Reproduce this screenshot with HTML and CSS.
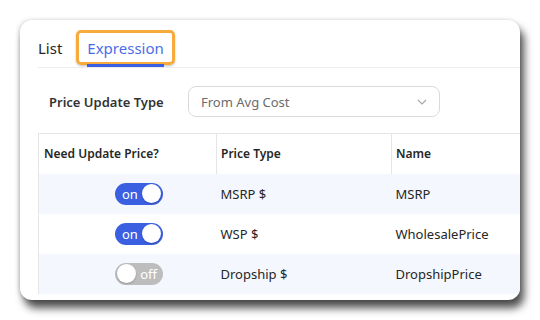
FILE: index.html
```html
<!DOCTYPE html>
<html lang="en">
<head>
    <meta charset="UTF-8">
    <meta name="viewport" content="width=device-width, initial-scale=1.0">
    <title>Price Update - Expression</title>
    <link rel="stylesheet" href="styles.css">
</head>
<body>
    <div class="page">
        <div class="card">
            <div class="tabs">
                <div class="tab">List</div>
                <div class="tab active">
                    <span class="tab-label">Expression</span>
                    <span class="ink-bar"></span>
                </div>
            </div>

            <div class="filter-row">
                <label class="filter-label">Price Update Type</label>
                <div class="select">
                    <span class="select-value">From Avg Cost</span>
                    <svg class="select-arrow" width="10" height="6" viewBox="0 0 10 6">
                        <path d="M1 1 L5 5 L9 1" fill="none" stroke="#a6a6a6" stroke-width="1.1"/>
                    </svg>
                </div>
            </div>

            <table class="price-table">
                <colgroup>
                    <col class="col-toggle">
                    <col class="col-type">
                    <col class="col-name">
                </colgroup>
                <thead>
                    <tr>
                        <th>Need Update Price?</th>
                        <th>Price Type</th>
                        <th>Name</th>
                    </tr>
                </thead>
                <tbody>
                    <tr class="striped">
                        <td class="toggle-cell"><span class="switch on"><span class="switch-text">on</span><span class="knob"></span></span></td>
                        <td>MSRP $</td>
                        <td>MSRP</td>
                    </tr>
                    <tr>
                        <td class="toggle-cell"><span class="switch on"><span class="switch-text">on</span><span class="knob"></span></span></td>
                        <td>WSP $</td>
                        <td>WholesalePrice</td>
                    </tr>
                    <tr class="striped">
                        <td class="toggle-cell"><span class="switch off"><span class="knob"></span><span class="switch-text">off</span></span></td>
                        <td>Dropship $</td>
                        <td>DropshipPrice</td>
                    </tr>
                </tbody>
            </table>
        </div>
    </div>
</body>
</html>
```

FILE: styles.css
```css
:root {
    --primary: #3a5fe0;
    --tab-blue: #4a6ee8;
    --focus: #f6ab3c;
    --border: #e6e6e6;
    --stripe: #f4f7fe;
    --text: #262626;
    --muted: #6b6b6b;
}

* {
    margin: 0;
    padding: 0;
    box-sizing: border-box;
}

body {
    background: #ffffff;
    font-family: 'Noto Sans', 'Open Sans', sans-serif;
    color: var(--text);
}

.page {
    padding: 20px;
}

.card {
    width: 500px;
    height: 280px;
    background: white;
    border-radius: 12px;
    overflow: hidden;
    padding-left: 18px;
    box-shadow: 4px 8px 8px rgba(0, 0, 0, 0.7), -1px 0 4px rgba(0, 0, 0, 0.18);
}

/* Tabs */
.tabs {
    display: flex;
    align-items: flex-end;
    height: 48px;
    padding-top: 10px;
    border-bottom: 1px solid #ededed;
}

.tab {
    position: relative;
    height: 37px;
    font-size: 15px;
    line-height: 36px;
    color: var(--text);
}

.tab.active {
    margin-left: 14px;
    padding: 0 8px;
    height: 35px;
    line-height: 30px;
    margin-bottom: 2px;
    border: 3px solid var(--focus);
    border-radius: 5px;
    color: var(--tab-blue);
    box-shadow: 0 1px 2px rgba(0, 0, 0, 0.25);
}

.ink-bar {
    position: absolute;
    left: 8px;
    right: 8px;
    bottom: -5px;
    height: 3px;
    background: var(--primary);
}

/* Filter row */
.filter-row {
    display: flex;
    align-items: center;
    height: 65px;
    padding-left: 11px;
    padding-top: 2px;
}

.filter-label {
    width: 139px;
    font-size: 13px;
    font-weight: 600;
    color: #333;
}

.select {
    display: flex;
    align-items: center;
    justify-content: space-between;
    width: 252px;
    height: 31px;
    padding: 0 12px 0 12px;
    border: 1px solid #d9d9d9;
    border-radius: 8px;
}

.select-value {
    font-size: 13px;
    color: var(--muted);
}

/* Table */
.price-table {
    width: 600px;
    border-collapse: collapse;
    table-layout: fixed;
    font-size: 13px;
}

.col-toggle {
    width: 178px;
}

.col-type {
    width: 175px;
}

.price-table th {
    height: 40px;
    padding: 0 4px;
    text-align: left;
    font-size: 12px;
    font-weight: 600;
    border: 1px solid var(--border);
    border-bottom: none;
    box-shadow: 0 3px 3px -2px rgba(0, 0, 0, 0.1);
}

.price-table th:first-child {
    padding-left: 5px;
}

.price-table td {
    height: 40px;
    padding: 0 4px;
    border-left: 1px solid var(--border);
}

.price-table td + td {
    border-left: none;
}

.price-table tr.striped td {
    background: var(--stripe);
}

.toggle-cell {
    padding-left: 76px !important;
}

/* Switch */
.switch {
    display: inline-flex;
    align-items: center;
    justify-content: space-between;
    width: 48px;
    height: 22px;
    border-radius: 11px;
    padding: 0 2px;
    vertical-align: middle;
}

.switch.on {
    background: var(--primary);
    padding-left: 7px;
}

.switch.off {
    background: #bdbdbd;
    padding-right: 6px;
}

.switch-text {
    font-size: 13px;
    color: white;
    line-height: 22px;
}

.knob {
    width: 19px;
    height: 19px;
    border-radius: 50%;
    background: white;
    box-shadow: 0 1px 2px rgba(0, 0, 0, 0.2);
}
```
